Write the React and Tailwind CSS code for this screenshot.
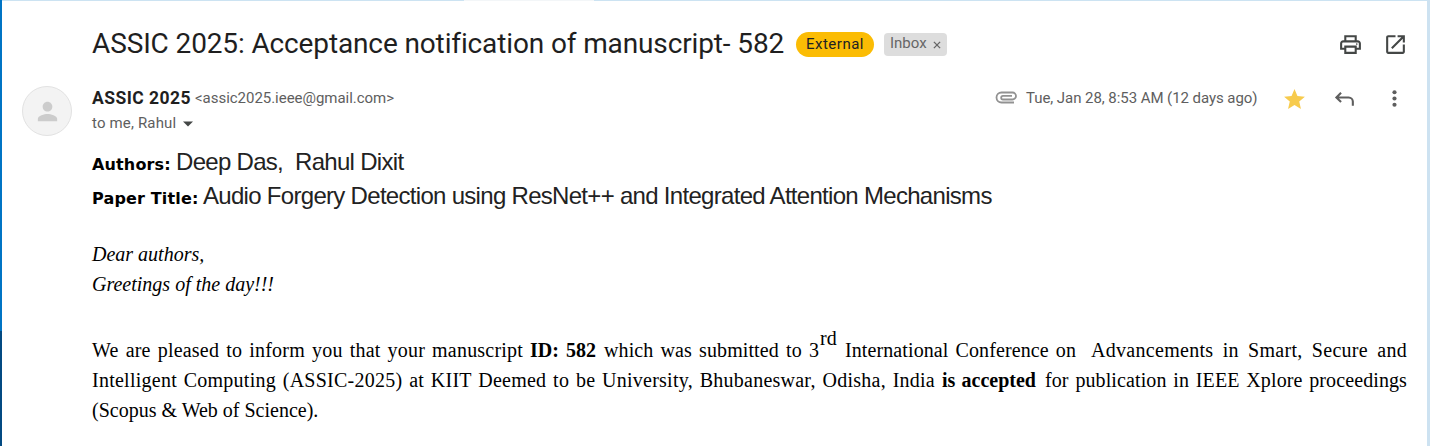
import React from "react";

function Header() {
  return (
    <header className="flex h-[54px] items-center pl-[70px] pt-[2px] font-['Roboto',sans-serif]">
      <h1 className="w-[692px] whitespace-nowrap text-[28px] leading-[36px] tracking-[-0.13px] text-[#1f1f1f]">
        ASSIC 2025: Acceptance notification of manuscript- 582
      </h1>
      <span className="ml-[12px] flex h-[25px] w-[78px] items-center justify-center rounded-full bg-[#fbbc04] text-[15px] tracking-[0.5px] text-[#202124]">
        External
      </span>
      <span className="ml-[10px] flex h-[23px] w-[63px] items-center rounded-[4px] bg-[#ddd] pb-[2px] pl-[6px] text-[15px] text-[#666]">
        Inbox
        <svg className="ml-[6px] mt-[3px]" width="8" height="8" viewBox="0 0 9 9" stroke="#666" strokeWidth="1.5">
          <path d="M1 1l7 7M8 1L1 8" />
        </svg>
      </span>
      <div className="ml-auto flex items-center gap-[20px]">
        <svg width="25" height="25" viewBox="0 0 24 24" fill="#444746">
          <path d="M19 8h-1V3H6v5H5c-1.660 0-3 1.340-3 3v6h4v4h12v-4h4v-6c0-1.660-1.340-3-3-3zM8 5h8v3H8V5zm8 14H8v-4h8v4zm2-4v-2H6v2H4v-4c0-.550.450-1 1-1h14c.550 0 1 .450 1 1v4h-2z" />
          <circle cx="18" cy="11.5" r="0.8" />
        </svg>
        <svg width="25" height="25" viewBox="0 0 24 24" fill="#444746">
          <path d="M19 19H5V5h7V3H5c-1.100 0-2 .9-2 2v14c0 1.100.9 2 2 2h14c1.100 0 2-.9 2-2v-7h-2v7zM14 3v2h3.590l-9.830 9.830 1.410 1.410L19 6.410V10h2V3h-7z" />
        </svg>
      </div>
    </header>
  );
}

function Sender() {
  return (
    <section className="flex h-[60px] pr-px font-['Roboto',sans-serif] text-[15px] text-[#5e5e5e]">
      <div className="mt-[3px] flex h-[50px] w-[50px] shrink-0 items-center justify-center rounded-full border border-[#e2e2e2] bg-[#f3f3f3]">
        <svg width="29" height="29" viewBox="0 0 24 24" fill="#ccc">
          <path d="M12 12c2.210 0 4-1.790 4-4s-1.790-4-4-4-4 1.790-4 4 1.790 4 4 4zm0 2c-2.670 0-8 1.340-8 4v2h16v-2c0-2.660-5.330-4-8-4z" />
        </svg>
      </div>
      <div className="ml-[20px] pt-[3px]">
        <div className="flex h-[25px] items-center whitespace-nowrap">
          <span className="w-[103px] text-[17.5px] font-bold tracking-[0.45px] text-[#1f1f1f]">ASSIC 2025</span>
          <span className="tracking-[-0.03px]">&lt;assic2025.ieee@gmail.com&gt;</span>
        </div>
        <div className="flex h-[25px] items-center">
          <span className="w-[91px] tracking-[0.16px]">to me, Rahul</span>
          <svg width="10" height="6" viewBox="0 0 10 6" fill="#444746">
            <path d="M0 .5h10l-5 5z" />
          </svg>
        </div>
      </div>
      <div className="ml-auto flex h-[32px] items-center whitespace-nowrap">
        <svg className="mb-[3px] mr-[9px]" width="22" height="13" viewBox="0 0 22 13" fill="none" stroke="#929292" strokeWidth="1.8">
          <path d="M19 11.500H6.500a5 5 0 0 1 0-10H17.500a3.500 3.500 0 0 1 0 7H8a1.800 1.800 0 0 1 0-3.600h9" />
        </svg>
        <span className="mb-[2px] w-[231px] tracking-[-0.06px]">Tue, Jan 28, 8:53 AM (12 days ago)</span>
        <svg className="ml-[25px]" width="25" height="25" viewBox="0 0 24 24" fill="#f7cb4d">
          <path d="M12 17.270L18.180 21l-1.640-7.030L22 9.240l-7.190-.61L12 2 9.190 8.630 2 9.240l5.460 4.730L5.820 21z" />
        </svg>
        <svg className="ml-[25px]" width="25" height="25" viewBox="0 0 24 24" fill="none" stroke="#5e5e5e" strokeWidth="2">
          <path d="M8.700 5.500L4.200 10l4.500 4.500M4.200 10H16a4 4 0 0 1 4 4v4" />
        </svg>
        <svg className="mb-[2px] ml-[25px]" width="25" height="25" viewBox="0 0 24 24" fill="#5e5e5e">
          <circle cx="12" cy="6" r="2" />
          <circle cx="12" cy="12" r="2" />
          <circle cx="12" cy="18" r="2" />
        </svg>
      </div>
    </section>
  );
}

function Message() {
  return (
    <article className="ml-[70px] font-['Liberation_Serif',serif] text-[20px] leading-[30px] text-black">
      <div className="flex h-[34px] items-baseline whitespace-pre leading-[34px]">
        <strong className="w-[84px] font-['DejaVu_Sans',sans-serif] text-[16px] tracking-[0.15px]">Authors:</strong>
        <span className="font-['Liberation_Sans',sans-serif] text-[24px] tracking-[-0.7px] text-[#222]">Deep Das,  Rahul Dixit</span>
      </div>
      <div className="flex h-[34px] items-baseline whitespace-pre leading-[34px]">
        <strong className="w-[111px] font-['DejaVu_Sans',sans-serif] text-[16px] tracking-[0.15px]">Paper Title:</strong>
        <span className="font-['Liberation_Sans',sans-serif] text-[24px] tracking-[-0.7px] text-[#222]">
          Audio Forgery Detection using ResNet++ and Integrated Attention Mechanisms
        </span>
      </div>
      <p className="mt-[26px] italic">Dear authors,</p>
      <p className="italic">Greetings of the day!!!</p>
      <div className="mt-[36px] w-[1315px] whitespace-nowrap">
        <p className="flex h-[30px] items-baseline [text-align-last:justify]">
          <span className="w-[431px] tracking-[0.2px]">We are pleased to inform you that your manuscript</span>
          <b className="ml-[7px] w-[66px]">ID: 582</b>
          <span className="ml-[8px] w-[215px] tracking-[0.1px]">which was submitted to 3</span>
          <span className="relative -top-[12px] ml-[1px] w-[17px] leading-[20px]">rd</span>
          <span className="ml-[8px] w-[231px] tracking-[0.1px]">International Conference on</span>
          <span className="ml-[15px] w-[316px] tracking-[0.3px]">Advancements in Smart, Secure and</span>
        </p>
        <p className="flex h-[30px] items-baseline [text-align-last:justify]">
          <span className="w-[843px] tracking-[0.25px]">
            Intelligent Computing (ASSIC-2025) at KIIT Deemed to be University, Bhubaneswar, Odisha, India
          </span>
          <b className="ml-[7px] w-[94px]">is accepted</b>
          <span className="ml-[9px] w-[362px] tracking-[0.1px]">for publication in IEEE Xplore proceedings</span>
        </p>
        <p className="h-[30px]">(Scopus &amp; Web of Science).</p>
      </div>
    </article>
  );
}

export default function App() {
  return (
    <div className="flex h-[446px] w-[1430px] overflow-hidden bg-white">
      <div className="flex w-[2px] shrink-0 flex-col bg-[#0074c4]">
        <div className="mt-auto h-[115px] bg-[#034a82]" />
      </div>
      <div className="flex min-w-0 flex-1 flex-col">
        <div className="flex h-px shrink-0 bg-[#cce3f2]">
          <div className="ml-[462px] w-[130px] bg-[#f3f6f8]" />
        </div>
        <main className="pl-[20px] pr-[19px] pt-[15px]">
          <Header />
          <div className="h-[13px]" />
          <Sender />
          <div className="h-[2px]" />
          <Message />
        </main>
      </div>
      <div className="w-[3px] shrink-0 bg-[#cde2f1]" />
    </div>
  );
}
